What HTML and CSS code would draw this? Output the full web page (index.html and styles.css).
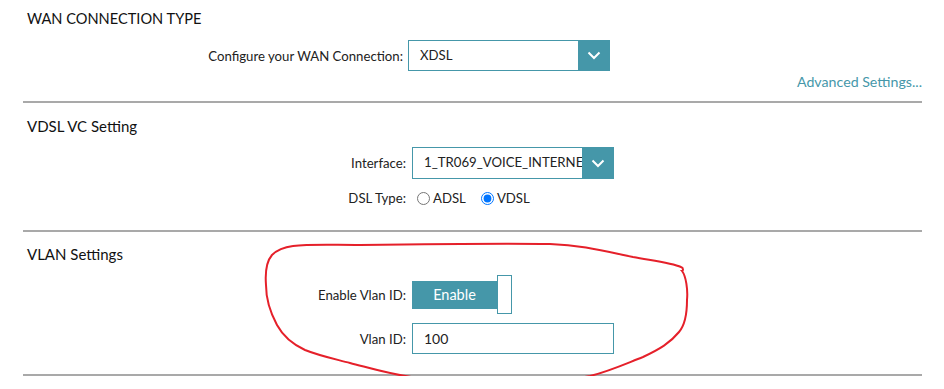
FILE: index.html
```html
<!DOCTYPE html>
<html lang="en">

<head>
  <meta charset="UTF-8" />
  <title>WAN Connection</title>
  <link rel="stylesheet" href="styles.css">
</head>

<body>
  <div class="page">
    <!-- wan type -->
    <section class="block first">
      <h2>WAN CONNECTION TYPE</h2>
      <div class="row wan">
        <label>Configure your WAN Connection:</label>
        <div class="select">
          <span class="value">XDSL</span>
          <span class="arrow"><svg width="14" height="9" viewBox="0 0 14 9"><path d="M1.5 1.5 L7 7 L12.5 1.5" fill="none" stroke="#fff" stroke-width="2"/></svg></span>
        </div>
      </div>
      <div class="more"><a href="#">Advanced Settings...</a></div>
    </section>

    <!-- vdsl -->
    <section class="block second">
      <h2>VDSL VC Setting</h2>
      <div class="row">
        <label>Interface:</label>
        <div class="select">
          <span class="value">1_TR069_VOICE_INTERNET</span>
          <span class="arrow"><svg width="14" height="9" viewBox="0 0 14 9"><path d="M1.5 1.5 L7 7 L12.5 1.5" fill="none" stroke="#fff" stroke-width="2"/></svg></span>
        </div>
      </div>
      <div class="row dsl">
        <label>DSL Type:</label>
        <div class="radios">
          <span class="opt"><input type="radio" name="dsl" />ADSL</span>
          <span class="opt"><input type="radio" name="dsl" checked />VDSL</span>
        </div>
      </div>
    </section>

    <!-- vlan -->
    <section class="block third">
      <h2>VLAN Settings</h2>
      <div class="row toggle-row">
        <label>Enable Vlan ID:</label>
        <div class="toggle">
          <span class="on">Enable</span>
          <span class="knob"></span>
        </div>
      </div>
      <div class="row vlan">
        <label>Vlan ID:</label>
        <div class="input">100</div>
      </div>
    </section>
  </div>

  <!-- hand drawn mark -->
  <svg class="mark" width="944" height="389" viewBox="0 0 944 389">
    <path d="M293 246 C310 244 330 245 360 245 C430 244 500 243 550 244 C580 245 600 250 633 257 C655 261 672 263 681 267 C684 268 683 271 682 271 C686 276 688 290 687 300 C687 315 685 325 679 332 C670 343 660 349 643 357 C625 364 610 371 590 376 C570 380 560 379 530 379 C490 379 460 380 420 378 C395 376 370 368 350 363 C335 359 320 356 305 350 C292 344 283 336 277 325 C270 312 266 300 266 285 C265 272 266 262 272 255 C278 249 285 247 293 246"
      fill="none" stroke="#e5202a" stroke-width="2" />
  </svg>
</body>

</html>
```

FILE: styles.css
```css
* {
  margin: 0;
  padding: 0;
  box-sizing: border-box;
}

body {
  background: #fff;
  font-family: Lato, "Open Sans", sans-serif;
  color: #222;
  font-size: 13.2px;
  position: relative;
}

.page {
  width: 899px;
  margin-left: 23px;
}

.block {
  border-bottom: 2px solid #a9a9a9;
}

.block h2 {
  font-size: 15px;
  font-weight: normal;
  line-height: 18px;
  padding-left: 4px;
  color: #111;
}

.first h2 {
  font-size: 14.6px;
}

.first {
  padding-top: 10px;
  padding-bottom: 11px;
}

.second {
  padding-top: 14px;
  padding-bottom: 24px;
}

.third {
  padding-top: 13px;
  padding-bottom: 20px;
}

.row {
  display: grid;
  grid-template-columns: 383px 202px;
  column-gap: 6px;
  align-items: center;
  margin-top: 12px;
}

.row label {
  text-align: right;
}

.row.wan {
  grid-template-columns: 380px 202px;
  column-gap: 5px;
}

.select {
  display: flex;
  height: 31px;
  border: 1px solid #4597a9;
  overflow: hidden;
}

.second .select {
  height: 32px;
}

.select .value {
  flex: 1;
  padding-left: 11px;
  line-height: 29px;
  white-space: nowrap;
  overflow: hidden;
  font-size: 13.2px;
}

.select .arrow {
  width: 31px;
  background: #4597a9;
  display: flex;
  align-items: center;
  justify-content: center;
}

.more {
  margin-top: 3px;
  text-align: right;
  line-height: 16px;
}

.more a {
  color: #4597a9;
  text-decoration: none;
  font-size: 14.2px;
}

.row.dsl {
  margin-top: 11px;
  height: 16px;
}

.radios {
  display: flex;
  gap: 15px;
  padding-left: 5px;
}

.opt {
  display: flex;
  align-items: center;
}

.opt input {
  width: 13px;
  height: 13px;
  margin-right: 3px;
}

.toggle {
  display: flex;
  align-items: center;
}

.toggle .on {
  width: 85px;
  height: 28px;
  background: #4597a9;
  color: #fff;
  text-align: center;
  line-height: 28px;
  font-size: 14.5px;
}

.toggle .knob {
  width: 15px;
  height: 39px;
  border: 1.5px solid #4597a9;
  background: #fff;
}

.row.vlan {
  margin-top: 9px;
}

.input {
  height: 31px;
  border: 1px solid #4597a9;
  padding-left: 11px;
  line-height: 29px;
  font-size: 14px;
}

.mark {
  position: absolute;
  top: 0;
  left: 0;
  pointer-events: none;
}
```
